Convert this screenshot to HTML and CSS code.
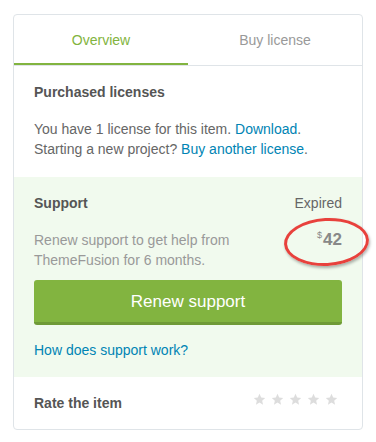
FILE: index.html
```html
<!DOCTYPE html>
<html lang="en">
<head>
    <meta charset="UTF-8">
    <meta name="viewport" content="width=device-width, initial-scale=1.0">
    <title>Item license</title>
    <link rel="stylesheet" href="styles.css">
</head>
<body>
    <div class="card">
        <div class="tabs">
            <div class="tab active">Overview</div>
            <div class="tab">Buy license</div>
        </div>

        <div class="section">
            <h3>Purchased licenses</h3>
            <p class="text">You have 1 license for this item. <a href="#">Download</a>.<br>
            Starting a new project? <a href="#">Buy another license</a>.</p>
        </div>

        <div class="section support">
            <div class="row">
                <h3>Support</h3>
                <span class="status">Expired</span>
            </div>
            <div class="row renew">
                <p class="muted">Renew support to get help from<br>ThemeFusion for 6 months.</p>
                <div class="price"><sup>$</sup>42<span class="circle"></span></div>
            </div>
            <button class="btn">Renew support</button>
            <a href="#" class="help">How does support work?</a>
        </div>

        <div class="section rate">
            <h3>Rate the item</h3>
            <div class="stars">
                <svg viewBox="0 0 24 24"><path d="M12 1.5l3.1 6.9 7.4.7-5.6 5 1.7 7.4L12 17.7l-6.6 3.8 1.7-7.4-5.6-5 7.4-.7z"/></svg>
                <svg viewBox="0 0 24 24"><path d="M12 1.5l3.1 6.9 7.4.7-5.6 5 1.7 7.4L12 17.7l-6.6 3.8 1.7-7.4-5.6-5 7.4-.7z"/></svg>
                <svg viewBox="0 0 24 24"><path d="M12 1.5l3.1 6.9 7.4.7-5.6 5 1.7 7.4L12 17.7l-6.6 3.8 1.7-7.4-5.6-5 7.4-.7z"/></svg>
                <svg viewBox="0 0 24 24"><path d="M12 1.5l3.1 6.9 7.4.7-5.6 5 1.7 7.4L12 17.7l-6.6 3.8 1.7-7.4-5.6-5 7.4-.7z"/></svg>
                <svg viewBox="0 0 24 24"><path d="M12 1.5l3.1 6.9 7.4.7-5.6 5 1.7 7.4L12 17.7l-6.6 3.8 1.7-7.4-5.6-5 7.4-.7z"/></svg>
            </div>
        </div>
    </div>
</body>
</html>
```

FILE: styles.css
```css
body {
    margin: 0;
    padding: 14px 13px;
    background: #fff;
    font-family: "Liberation Sans", Arial, sans-serif;
    font-size: 14px;
    line-height: 20px;
    color: #666;
}
.card {
    width: 348px;
    border: 1px solid #dfe4e8;
    border-radius: 4px;
}
.tabs {
    display: flex;
    border-bottom: 1px solid #dfe4e8;
}
.tab {
    flex: 1;
    text-align: center;
    height: 48px;
    line-height: 50px;
    color: #999;
    border-bottom: 2px solid transparent;
}
.tab.active {
    color: #82b440;
    border-bottom-color: #82b440;
}
.section {
    padding: 16px 20px 18px;
}
h3 {
    margin: 0;
    font-size: 14px;
    font-weight: bold;
    color: #555;
}
p {
    margin: 0;
}
.text {
    margin-top: 17px;
}
a {
    color: #0084b4;
    text-decoration: none;
}
.support {
    background: #f1faee;
    padding-bottom: 17px;
}
.row {
    display: flex;
    justify-content: space-between;
}
.renew {
    margin-top: 17px;
}
.muted {
    color: #999;
}
.price {
    position: relative;
    font-size: 17px;
    font-weight: bold;
    color: #888;
    line-height: 20px;
}
.price sup {
    font-size: 9px;
    font-weight: normal;
    vertical-align: top;
    line-height: 10px;
    margin-right: 1px;
}
.circle {
    position: absolute;
    left: -33px;
    top: -12px;
    width: 79px;
    height: 42px;
    border: 3px solid #e8413c;
    border-radius: 50%;
    box-shadow: 1px 2px 3px rgba(0, 0, 0, 0.3);
    transform: rotate(-3deg);
}
.btn {
    display: block;
    width: 100%;
    height: 45px;
    margin-top: 10px;
    border: none;
    border-bottom: 3px solid #6f9a37;
    border-radius: 3px;
    background: #82b440;
    color: #fff;
    font-family: inherit;
    font-size: 17px;
    padding: 2px 0 0;
}
.help {
    display: block;
    margin-top: 15px;
}
.rate {
    display: flex;
    justify-content: space-between;
    padding-bottom: 16px;
}
.stars {
    display: flex;
    gap: 5px;
    padding-right: 4px;
    margin-top: 0;
}
.stars svg {
    width: 13px;
    height: 13px;
    fill: #ddd;
}
```
